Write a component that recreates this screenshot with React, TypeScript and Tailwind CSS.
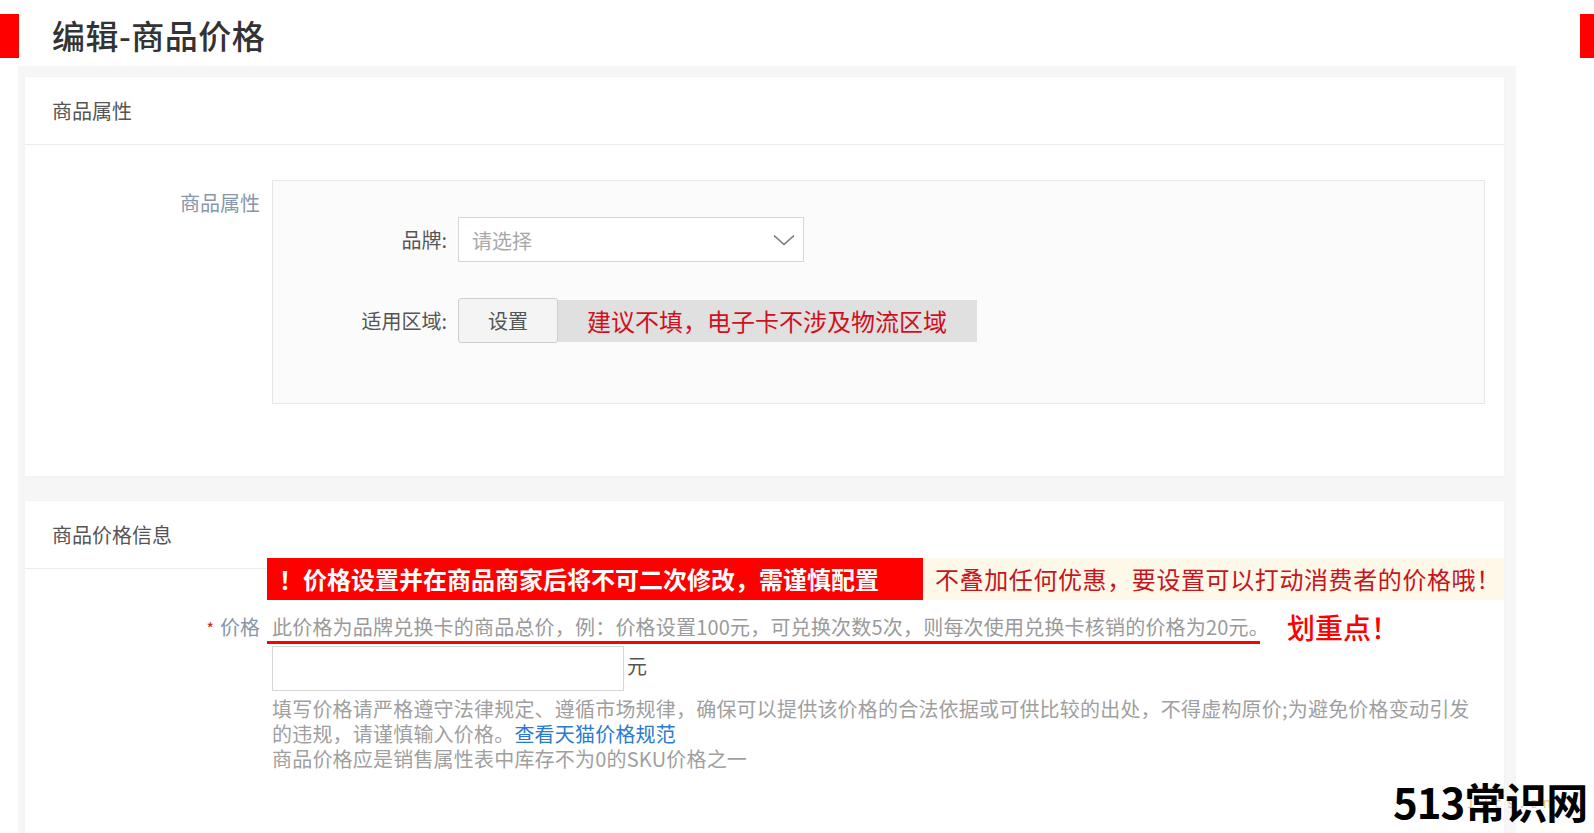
import React from 'react';

const font = { fontFamily: '"Noto Sans CJK SC", "Noto Sans", sans-serif' };

const App = () => {
  return (
    <div
      className="relative w-[1594px] h-[833px] overflow-hidden bg-white flex flex-col"
      style={font}
    >
      {/* title bar */}
      <div className="h-[66px] shrink-0 flex items-start pt-[14px]">
        <div className="w-[19px] h-[44px] bg-[#ff0000]" />
        <div className="ml-[33px] -mt-[3px] text-[33px] leading-[48px] text-[#333] font-medium tracking-[0.5px]">
          编辑-商品价格
        </div>
        <div className="flex-1" />
        <div className="w-[14px] h-[44px] bg-[#ff0000]" />
      </div>

      {/* gray panel */}
      <div className="ml-[18px] w-[1498px] flex-1 bg-[#f6f6f6] pt-[11px] pl-[7px] pr-[12px] flex flex-col gap-[25px]">
        {/* card 1 */}
        <div className="bg-white h-[399px] shrink-0 shadow-[0_0_2px_rgba(0,0,0,0.04)]">
          <div className="h-[68px] border-b border-[#ececec] px-[27px] flex items-center text-[20px] text-[#555]">
            商品属性
          </div>
          <div className="flex pt-[35px]">
            <div className="w-[235px] text-right pt-[9px] text-[20px] leading-[28px] text-[#8797ab]">
              商品属性
            </div>
            <div className="ml-[12px] w-[1213px] h-[224px] bg-[#fbfbfb] border border-[#e6e6e6] pt-[36px]">
              <div className="flex items-center">
                <div className="w-[174px] text-right text-[20px] text-[#555]">品牌:</div>
                <div className="ml-[11px] w-[346px] h-[45px] bg-white border border-[#d6d6d6] flex items-center justify-between pl-[13px] pr-[8px]">
                  <span className="text-[20px] text-[#a8a8a8] mt-[3px]">请选择</span>
                  <svg width="22" height="12" viewBox="0 0 22 12" fill="none">
                    <path d="M1 1.5 L11 10.5 L21 1.5" stroke="#777" strokeWidth="1.6" />
                  </svg>
                </div>
              </div>
              <div className="flex items-center mt-[36px]">
                <div className="w-[174px] text-right text-[20px] text-[#555]">适用区域:</div>
                <div className="ml-[11px] w-[100px] h-[45px] bg-[#f4f4f4] border border-[#cfcfcf] rounded-[3px] flex items-center justify-center text-[20px] text-[#555]">
                  设置
                </div>
                <div className="w-[419px] h-[42px] bg-[#e0e0e0] flex items-center pl-[29px] text-[24px] text-[#d0101e]">
                  建议不填，电子卡不涉及物流区域
                </div>
              </div>
            </div>
          </div>
        </div>

        {/* card 2 */}
        <div className="bg-white flex-1 shadow-[0_0_2px_rgba(0,0,0,0.04)]">
          <div className="h-[68px] border-b border-[#ececec] px-[27px] flex items-center text-[20px] text-[#555]">
            商品价格信息
          </div>
          <div className="relative -mt-[11px] ml-[242px] flex h-[42px]">
            <div className="w-[656px] bg-[#ff0000] flex items-center pl-[12px] text-[24px] font-bold text-white">
              ！价格设置并在商品商家后将不可二次修改，需谨慎配置
            </div>
            <div className="flex-1 bg-[#fdf8e8] flex items-center pl-[12px] text-[24px] tracking-[0.6px] text-[#c8141e]">
              不叠加任何优惠，要设置可以打动消费者的价格哦！
            </div>
          </div>

          <div className="flex mt-[13px]">
            <div className="w-[235px] text-right text-[20px] leading-[28px] text-[#8797ab]">
              <span className="text-[#e02020] text-[16px] mr-[6px]">*</span>价格
            </div>
            <div className="ml-[12px] flex flex-col">
              <div className="flex items-center">
                <span className="text-[20px] leading-[28px] tracking-[0.2px] text-[#9a9a9a]">
                  此价格为品牌兑换卡的商品总价，例：价格设置100元，可兑换次数5次，则每次使用兑换卡核销的价格为20元。
                </span>
                <span className="ml-[18px] text-[28px] leading-[28px] font-medium text-[#ff0000]">划重点！</span>
              </div>
              <div className="-ml-[5px] w-[993px] h-[3px] bg-[#ff0000]" />
              <div className="flex items-center mt-[2px]">
                <div className="w-[352px] h-[45px] border border-[#d6d6d6] bg-white" />
                <span className="ml-[3px] -mt-[5px] text-[20px] text-[#555]">元</span>
              </div>
              <div className="mt-[5px] text-[20px] leading-[25px] tracking-[0.2px] text-[#9f9f9f]">
                <div>填写价格请严格遵守法律规定、遵循市场规律，确保可以提供该价格的合法依据或可供比较的出处，不得虚构原价;为避免价格变动引发</div>
                <div>
                  的违规，请谨慎输入价格。<span className="text-[#2a7bd0]">查看天猫价格规范</span>
                </div>
                <div>商品价格应是销售属性表中库存不为0的SKU价格之一</div>
              </div>
            </div>
          </div>
        </div>
      </div>

      {/* watermark */}
      <div className="absolute left-[1393px] top-[776px] w-[200px] h-[54px]">
        <div className="absolute left-[60px] top-[16px] text-[14px] tracking-[6px] text-[#ecc08f]">513cs.cn</div>
        <div className="absolute left-0 top-0 text-[42px] leading-[50px] font-bold text-black tracking-[-1px]">
          513常识网
        </div>
      </div>
    </div>
  );
};

export default App;
